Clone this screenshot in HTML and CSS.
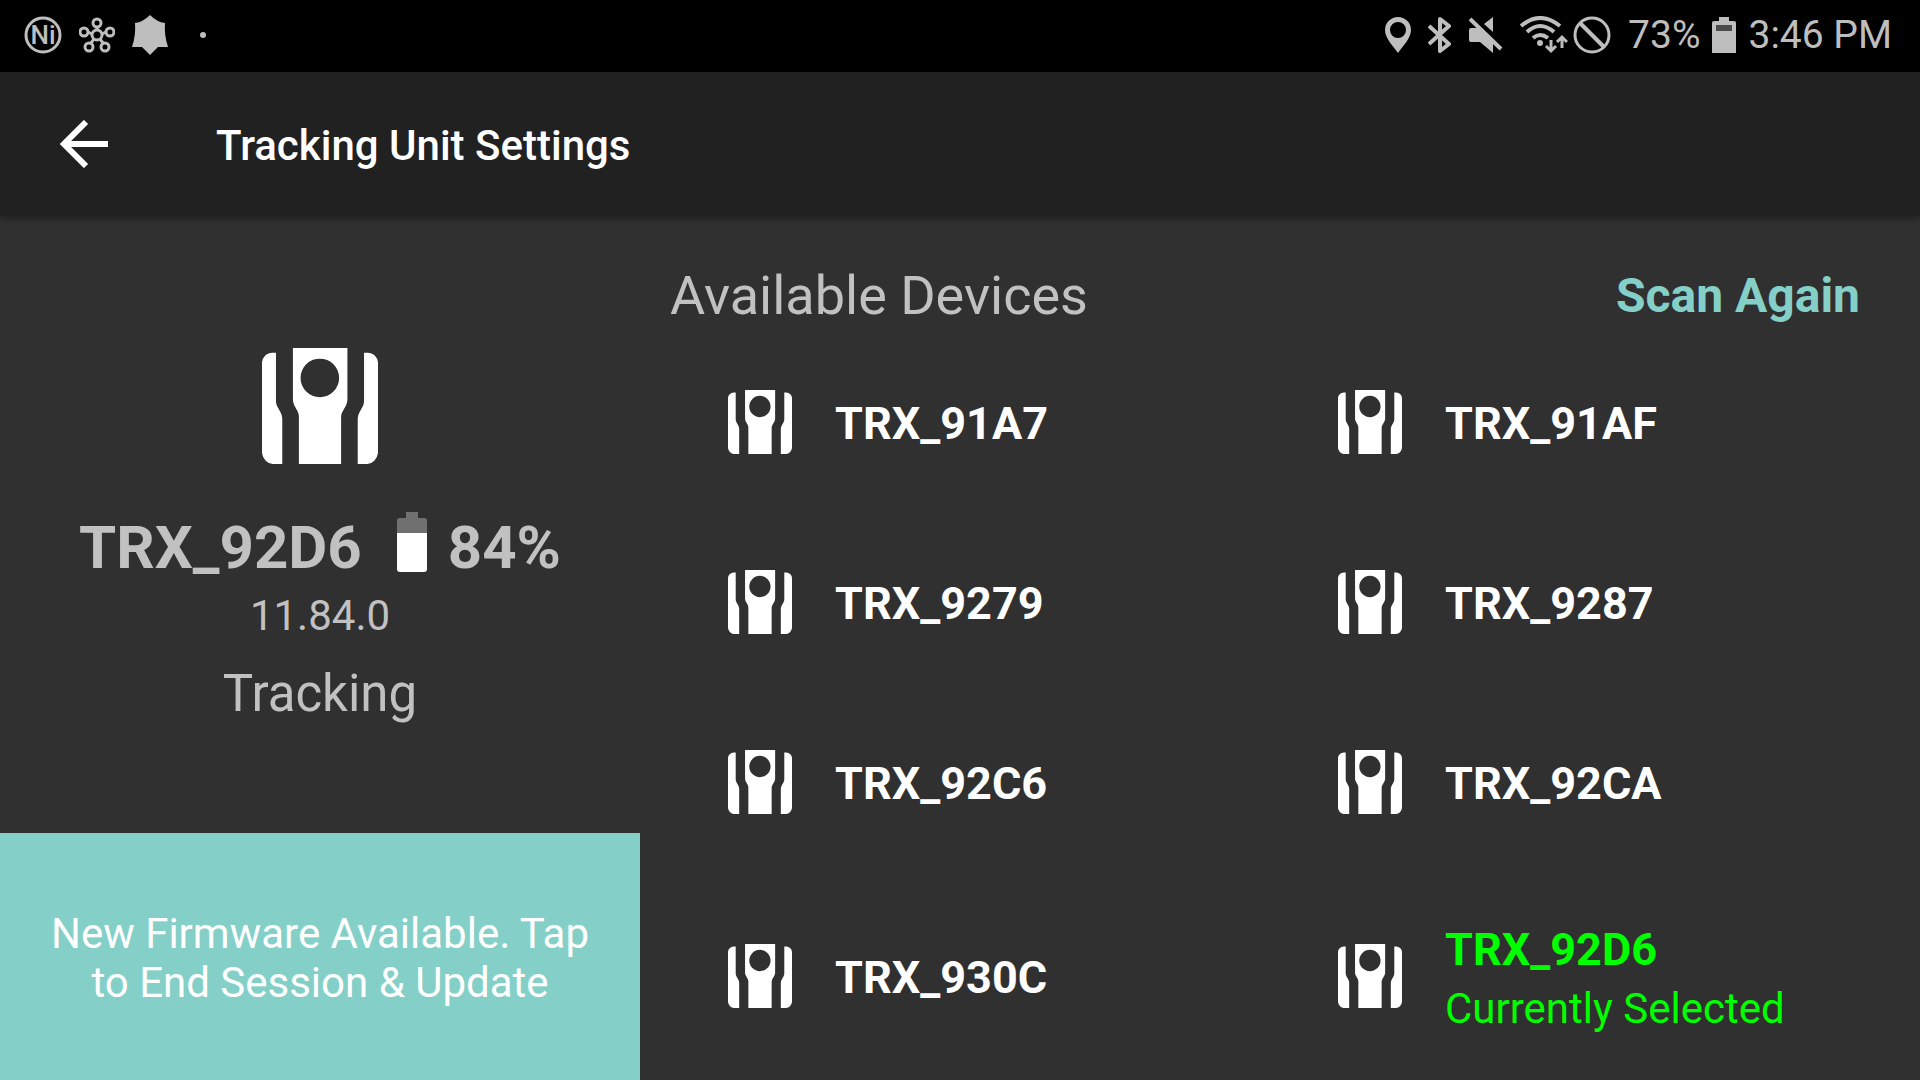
FILE: index.html
```html
<!DOCTYPE html>
<html lang="en">
<head>
    <meta charset="UTF-8">
    <title>Tracking Unit Settings</title>
    <link rel="stylesheet" href="styles.css">
</head>
<body>

<!-- shared tracking unit icon -->
<svg class="symbols" aria-hidden="true">
    <symbol id="unit" viewBox="0 0 349 349">
        <path d="M42 14H32Q18 14 9 23T0 44V316Q2 330 11 339T32 349H61V212Q61 203 56 194L46 176Q42 168 42 160Z"/>
        <path d="M307 14H317Q331 14 340 23T349 44V316Q347 330 338 339T317 349H288V212Q288 203 293 194L303 176Q307 168 307 160Z"/>
        <path fill-rule="evenodd" d="M93 0H257V156Q257 164 253 172L243 190Q238 198 238 206V349H111V206Q111 198 107 190L97 172Q93 164 93 156ZM174 32a58 58 0 1 0 0 116a58 58 0 1 0 0-116Z"/>
    </symbol>
</svg>

<div class="status_bar">
    <div class="status_left">
        <svg width="38" height="38" viewBox="0 0 38 38">
            <circle cx="19" cy="19" r="17" fill="none" stroke="currentColor" stroke-width="3"/>
            <text class="logo_text" x="19" y="28" text-anchor="middle">Ni</text>
        </svg>
        <svg width="36" height="36" viewBox="0 0 36 36" fill="none" stroke="currentColor" stroke-width="3">
            <path d="M18 9V13M9 15L13 17M27 15L23 17M12 26L15 22M24 26L21 22"/>
            <circle cx="18" cy="18" r="5"/>
            <circle cx="18" cy="6" r="4"/>
            <circle cx="5" cy="15" r="4"/>
            <circle cx="31" cy="15" r="4"/>
            <circle cx="10" cy="30" r="4"/>
            <circle cx="26" cy="30" r="4"/>
        </svg>
        <svg width="36" height="40" viewBox="0 0 36 40" fill="currentColor">
            <path d="M18 0Q25 7 33 8Q32 20 36 32H26L18 40L10 32H0Q4 20 3 8Q11 7 18 0Z"/>
        </svg>
        <svg width="36" height="36" viewBox="0 0 36 36" fill="currentColor">
            <circle cx="18" cy="18" r="3"/>
        </svg>
    </div>

    <div class="status_right">
        <svg width="26" height="36" viewBox="0 0 26 36" fill="currentColor">
            <path fill-rule="evenodd" d="M13 0A13 13 0 0 0 0 13C0 21 8 29 13 36C18 29 26 21 26 13A13 13 0 0 0 13 0ZM13 5a8 8 0 1 1 0 16a8 8 0 1 1 0-16Z"/>
        </svg>
        <svg width="24" height="38" viewBox="0 0 24 38" fill="none" stroke="currentColor" stroke-width="4">
            <path d="M1 10L21 28L12 35V3L21 10L1 28" stroke-linejoin="round"/>
        </svg>
        <svg width="34" height="36" viewBox="0 0 34 36" fill="currentColor">
            <path d="M24 0V15L15 7ZM0 13Q0 11 2 11H11L24 23V36L11 25H2Q0 25 0 23Z"/>
            <path d="M1 2L32 32" stroke="currentColor" stroke-width="4"/>
        </svg>
        <div class="network">
            <svg width="48" height="38" viewBox="0 0 48 38" fill="none" stroke="currentColor" stroke-width="4">
                <path d="M1 10Q20 -6 40 10M7 16Q20 4 34 16M13 22Q20 16 28 22"/>
                <circle cx="20" cy="27" r="3" fill="currentColor" stroke="none"/>
                <path d="M31 24V34M26 30L31 35L36 30M42 32V22M37 26L42 21L47 26" stroke-width="3"/>
            </svg>
            <svg width="38" height="38" viewBox="0 0 38 38" fill="none" stroke="currentColor" stroke-width="3">
                <circle cx="19" cy="19" r="17"/>
                <path d="M7 7L31 31" stroke-width="4"/>
            </svg>
        </div>
        <div class="clock">
            <span>73%</span>
            <svg width="24" height="36" viewBox="0 0 24 36" fill="currentColor">
                <path d="M7 0H17V4H22Q24 4 24 6V36H0V6Q0 4 2 4H7Z"/>
                <rect x="4" y="8" width="16" height="6" fill="#4b4b4b"/>
            </svg>
            <span>3:46 PM</span>
        </div>
    </div>
</div>

<header class="app_bar">
    <button class="back" type="button" aria-label="Back">
        <svg width="48" height="48" viewBox="0 0 48 48" fill="none" stroke="currentColor" stroke-width="6">
            <path d="M26 2L4 24L26 46M4 24H48"/>
        </svg>
    </button>
    <h1>Tracking Unit Settings</h1>
</header>

<main class="content">
    <section class="current">
        <div class="current_info">
            <svg class="current_icon"><use href="#unit"/></svg>
            <div class="current_name">
                <h2>TRX_92D6</h2>
                <div class="battery">
                    <svg width="30" height="60" viewBox="0 0 30 60">
                        <path fill="#707070" d="M9 0H21V6H27Q30 6 30 9V21H0V9Q0 6 3 6H9Z"/>
                        <path fill="#fff" d="M0 21H30V57Q30 60 27 60H3Q0 60 0 57Z"/>
                    </svg>
                    <span>84%</span>
                </div>
            </div>
            <p class="version">11.84.0</p>
            <p class="state">Tracking</p>
        </div>
        <button class="firmware" type="button">New Firmware Available. Tap to End Session &amp; Update</button>
    </section>

    <section class="available">
        <div class="available_head">
            <h2>Available Devices</h2>
            <button class="scan" type="button">Scan Again</button>
        </div>

        <div class="devices">
            <button class="device" type="button">
                <svg class="device_icon"><use href="#unit"/></svg>
                <span class="device_text"><span class="device_name">TRX_91A7</span></span>
            </button>
            <button class="device" type="button">
                <svg class="device_icon"><use href="#unit"/></svg>
                <span class="device_text"><span class="device_name">TRX_91AF</span></span>
            </button>
            <button class="device" type="button">
                <svg class="device_icon"><use href="#unit"/></svg>
                <span class="device_text"><span class="device_name">TRX_9279</span></span>
            </button>
            <button class="device" type="button">
                <svg class="device_icon"><use href="#unit"/></svg>
                <span class="device_text"><span class="device_name">TRX_9287</span></span>
            </button>
            <button class="device" type="button">
                <svg class="device_icon"><use href="#unit"/></svg>
                <span class="device_text"><span class="device_name">TRX_92C6</span></span>
            </button>
            <button class="device" type="button">
                <svg class="device_icon"><use href="#unit"/></svg>
                <span class="device_text"><span class="device_name">TRX_92CA</span></span>
            </button>
            <button class="device" type="button">
                <svg class="device_icon"><use href="#unit"/></svg>
                <span class="device_text"><span class="device_name">TRX_930C</span></span>
            </button>
            <button class="device selected" type="button">
                <svg class="device_icon"><use href="#unit"/></svg>
                <span class="device_text">
                    <span class="device_name">TRX_92D6</span>
                    <span class="device_note">Currently Selected</span>
                </span>
            </button>
        </div>
    </section>
</main>

</body>
</html>
```
FILE: styles.css
```css
* {
    margin: 0;
    padding: 0;
    box-sizing: border-box;
}

body {
    display: flex;
    flex-direction: column;
    min-height: 100vh;
    background-color: #303030;
    color: #c1c1c1;
    font-family: Roboto, "Liberation Sans", sans-serif;
}

button {
    border: none;
    background: none;
    color: white;
    font-family: inherit;
    cursor: pointer;
}

svg {
    display: block;
    flex-shrink: 0;
}

.symbols {
    display: none;
}

/* status bar */
.status_bar {
    display: flex;
    justify-content: space-between;
    height: 72px;
    padding: 0 28px 2px 24px;
    background-color: black;
    color: #bebebe;
}

.status_left, .status_right, .network, .clock {
    display: flex;
    align-items: center;
}

.status_left {
    gap: 17px;
}

.status_right {
    gap: 17px;
}

.network {
    gap: 5px;
}

.clock {
    gap: 12px;
    font-size: 39px;
}

.logo_text {
    fill: currentColor;
    font-size: 26px;
    font-weight: 500;
}

/* title bar */
.app_bar {
    display: flex;
    align-items: center;
    gap: 108px;
    height: 144px;
    padding-left: 60px;
    background-color: #212121;
    box-shadow: 0 2px 8px rgba(0, 0, 0, 0.4);
}

.app_bar h1 {
    padding-top: 2px;
    color: white;
    font-size: 42px;
    font-weight: 500;
}

.content {
    flex: 1;
    display: grid;
    grid-template-columns: 1fr 2fr;
}

/* current unit */
.current {
    display: flex;
    flex-direction: column;
}

.current_info {
    flex: 1;
    display: flex;
    flex-direction: column;
    align-items: center;
    justify-content: center;
    padding-top: 22px;
}

.current_icon {
    width: 116px;
    height: 116px;
    margin-bottom: 48px;
    fill: white;
}

.current_name {
    display: flex;
    align-items: center;
    gap: 35px;
    margin-bottom: 8px;
    font-size: 60px;
    font-weight: bold;
}

.current_name h2 {
    font-size: 60px;
}

.battery {
    display: flex;
    align-items: flex-start;
    gap: 21px;
}

.version {
    margin-bottom: 24px;
    font-size: 42px;
}

.state {
    font-size: 51px;
}

.firmware {
    height: 247px;
    padding: 2px 48px 0;
    background-color: #84d0c8;
    font-size: 42px;
}

/* device list */
.available {
    display: flex;
    flex-direction: column;
    padding: 0 30px;
}

.available_head {
    display: flex;
    align-items: center;
    justify-content: space-between;
    height: 116px;
    padding: 42px 30px 0 0;
}

.available_head h2 {
    font-size: 54px;
    font-weight: normal;
}

.scan {
    color: #84d0c8;
    font-size: 48px;
    font-weight: bold;
}

.devices {
    flex: 1;
    display: grid;
    grid-template-columns: 1fr 1fr;
    grid-template-rows: 180px 180px 180px 1fr;
}

.device {
    display: flex;
    align-items: center;
    gap: 43px;
    padding-left: 58px;
    text-align: left;
}

.device_icon {
    width: 64px;
    height: 64px;
    fill: white;
}

.device_text {
    display: flex;
    flex-direction: column;
    gap: 8px;
    padding-top: 3px;
}

.device_name {
    font-size: 45px;
    font-weight: bold;
}

.device_note {
    font-size: 42px;
}

.selected {
    color: #00ff00;
}
```
